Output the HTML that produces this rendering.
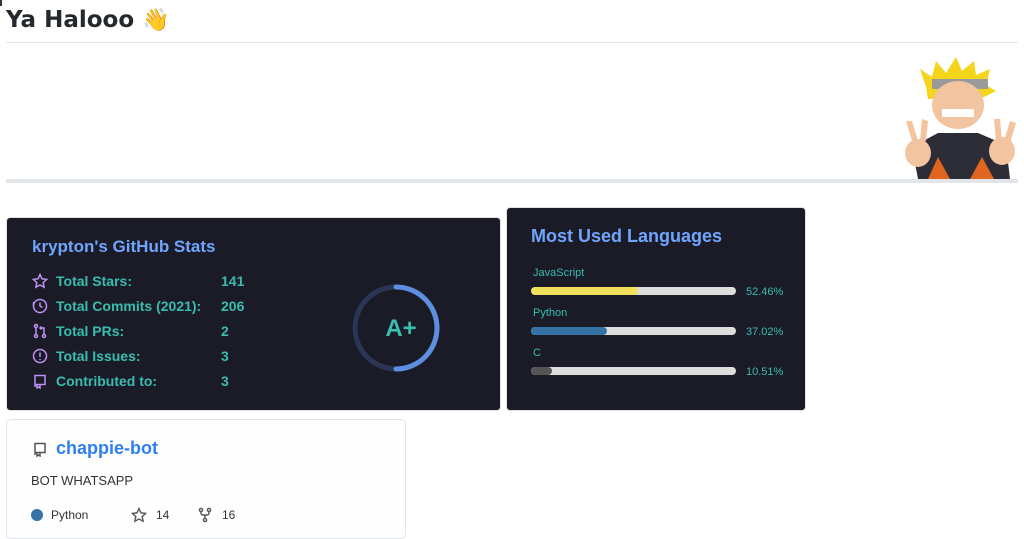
<!DOCTYPE html>
<html><head><meta charset="utf-8"><style>
*{margin:0;padding:0;box-sizing:border-box}
body{width:1024px;height:539px;background:#fff;position:relative;overflow:hidden;font-family:"Liberation Sans",sans-serif}
.abs{position:absolute}
h1{position:absolute;left:6px;top:7px;font-family:"DejaVu Sans",sans-serif;font-weight:bold;font-size:23px;color:#24292e}
.card{position:absolute;background:#1a1b27;border-radius:4px;border:1px solid #e4e2e2}
.st{position:absolute;font-weight:bold;font-size:14px;color:#38bdae}
.lbl{position:absolute;font-size:11px;color:#38bdae}
.bar{position:absolute;left:24px;width:205px;height:8px;border-radius:4px;background:#ddd;overflow:hidden}
.bar i{display:block;height:8px;border-radius:4px}
.pct{position:absolute;left:239px;font-size:11px;color:#38bdae}
</style></head><body>
<div class="abs" style="left:0;top:0;width:2px;height:6px;background:#333"></div>
<h1>Ya Halooo <span style="font-size:22px">👋</span></h1>
<div class="abs" style="left:6px;top:42px;width:1012px;height:1px;background:#e1e4e8"></div>
<svg class="abs" style="left:898px;top:57px" width="120" height="122" viewBox="0 0 120 122">
<path d="M28 30 L22 12 L34 20 L38 4 L48 16 L58 0 L64 14 L76 4 L78 18 L92 12 L88 28 L98 34 L86 40 L30 42 Z" fill="#f5d41c"/>
<rect x="34" y="22" width="56" height="10" fill="#9a9a9a"/>
<ellipse cx="60" cy="48" rx="26" ry="24" fill="#f2c4a0"/>
<rect x="44" y="52" width="32" height="8" fill="#fff"/>
<path d="M20 122 L14 90 L40 76 L80 76 L108 88 L112 122 Z" fill="#2d2d38"/>
<path d="M30 122 L40 100 L52 122 Z M72 122 L84 100 L96 122Z" fill="#e0651e"/>
<ellipse cx="20" cy="96" rx="13" ry="14" fill="#f2c4a0"/>
<ellipse cx="104" cy="94" rx="13" ry="14" fill="#f2c4a0"/>
<path d="M14 84 L8 64 L14 64 L20 84 M22 84 L24 62 L30 64 L28 84" fill="#f2c4a0"/>
<path d="M98 84 L96 62 L102 62 L104 84 M106 84 L112 64 L118 66 L112 86" fill="#f2c4a0"/>
</svg>
<div class="abs" style="left:6px;top:179px;width:1012px;height:4px;background:#e1e4e8"></div>

<div class="card" style="left:6px;top:217px;width:495px;height:194px">
<div class="abs" style="left:25px;top:19px;font-size:17px;font-weight:bold;color:#70a5fd">krypton's GitHub Stats</div>
<svg class="abs" style="left:25px;top:55px" width="16" height="120" fill="none" stroke="#bf91f3" stroke-width="1.5">
<path d="M8 1.5l2 4.3 4.6.6-3.4 3.2.9 4.6L8 12l-4.1 2.2.9-4.6L1.4 6.4 6 5.8z"/>
<g transform="translate(0,25)"><circle cx="8" cy="8" r="6.5"/><path d="M8 4.5V8l2.5 1.5M1.5 4V8"/></g>
<g transform="translate(0,50)"><circle cx="4" cy="3" r="1.5"/><circle cx="4" cy="13" r="1.5"/><circle cx="12" cy="13" r="1.5"/><path d="M4 4.5v7M12 11.5V5H8M9.5 3.5 8 5l1.5 1.5"/></g>
<g transform="translate(0,75)"><circle cx="8" cy="8" r="6.5"/><path d="M8 4.5v4.5M8 11v1"/></g>
<g transform="translate(0,100)"><path d="M3 14V2.5h10v9H3M5 12v3l1.5-1 1.5 1v-3"/></g>
</svg>
<div class="st" style="left:49px;top:55px">Total Stars:</div><div class="st" style="left:214px;top:55px">141</div>
<div class="st" style="left:49px;top:80px">Total Commits (2021):</div><div class="st" style="left:214px;top:80px">206</div>
<div class="st" style="left:49px;top:105px">Total PRs:</div><div class="st" style="left:214px;top:105px">2</div>
<div class="st" style="left:49px;top:130px">Total Issues:</div><div class="st" style="left:214px;top:130px">3</div>
<div class="st" style="left:49px;top:155px">Contributed to:</div><div class="st" style="left:214px;top:155px">3</div>
<svg class="abs" style="left:344px;top:65px" width="90" height="90">
<circle cx="45" cy="45" r="41" fill="none" stroke="#2b3655" stroke-width="5"/>
<path d="M45 4 A41 41 0 0 1 45 86" fill="none" stroke="#5d8ee0" stroke-width="5" stroke-linecap="round"/>
<text x="50" y="53" text-anchor="middle" font-family="Liberation Sans" font-weight="bold" font-size="24" fill="#38bdae">A+</text>
</svg>
</div>

<div class="card" style="left:506px;top:207px;width:300px;height:204px">
<div class="abs" style="left:24px;top:18px;font-size:18px;font-weight:bold;color:#70a5fd">Most Used Languages</div>
<div class="lbl" style="left:26px;top:59px">JavaScript</div>
<div class="bar" style="top:79px"><i style="width:107px;background:#f1e05a"></i></div>
<div class="pct" style="top:78px">52.46%</div>
<div class="lbl" style="left:26px;top:99px">Python</div>
<div class="bar" style="top:119px"><i style="width:76px;background:#3572a5"></i></div>
<div class="pct" style="top:118px">37.02%</div>
<div class="lbl" style="left:26px;top:139px">C</div>
<div class="bar" style="top:159px"><i style="width:21px;background:#555"></i></div>
<div class="pct" style="top:158px">10.51%</div>
</div>

<div class="abs" style="left:6px;top:419px;width:400px;height:120px;border:1px solid #e1e4e8;border-radius:5px;background:#fffefe">
<svg class="abs" style="left:25px;top:21px" width="16" height="16" fill="none" stroke="#555" stroke-width="1.5"><path d="M3 14V2.5h10v9H3M5 12v3l1.5-1 1.5 1v-3"/></svg>
<div class="abs" style="left:49px;top:18px;font-size:18px;font-weight:bold;color:#2f80ed">chappie-bot</div>
<div class="abs" style="left:24px;top:53px;font-size:13px;color:#333">BOT WHATSAPP</div>
<div class="abs" style="left:24px;top:89px;width:12px;height:12px;border-radius:6px;background:#3572a5"></div>
<div class="abs" style="left:44px;top:88px;font-size:12px;color:#333">Python</div>
<svg class="abs" style="left:124px;top:87px" width="16" height="16" fill="none" stroke="#555" stroke-width="1.4"><path d="M8 1.5l2 4.3 4.6.6-3.4 3.2.9 4.6L8 12l-4.1 2.2.9-4.6L1.4 6.4 6 5.8z"/></svg>
<div class="abs" style="left:149px;top:88px;font-size:12px;color:#333">14</div>
<svg class="abs" style="left:190px;top:87px" width="16" height="16" fill="none" stroke="#555" stroke-width="1.4"><circle cx="4" cy="3" r="1.6"/><circle cx="12" cy="3" r="1.6"/><circle cx="8" cy="13" r="1.6"/><path d="M4 4.6v1.4c0 1.5 1 2 2 2h4c1 0 2-.5 2-2V4.6M8 8v3.4"/></svg>
<div class="abs" style="left:215px;top:88px;font-size:12px;color:#333">16</div>
</div>
</body></html>
